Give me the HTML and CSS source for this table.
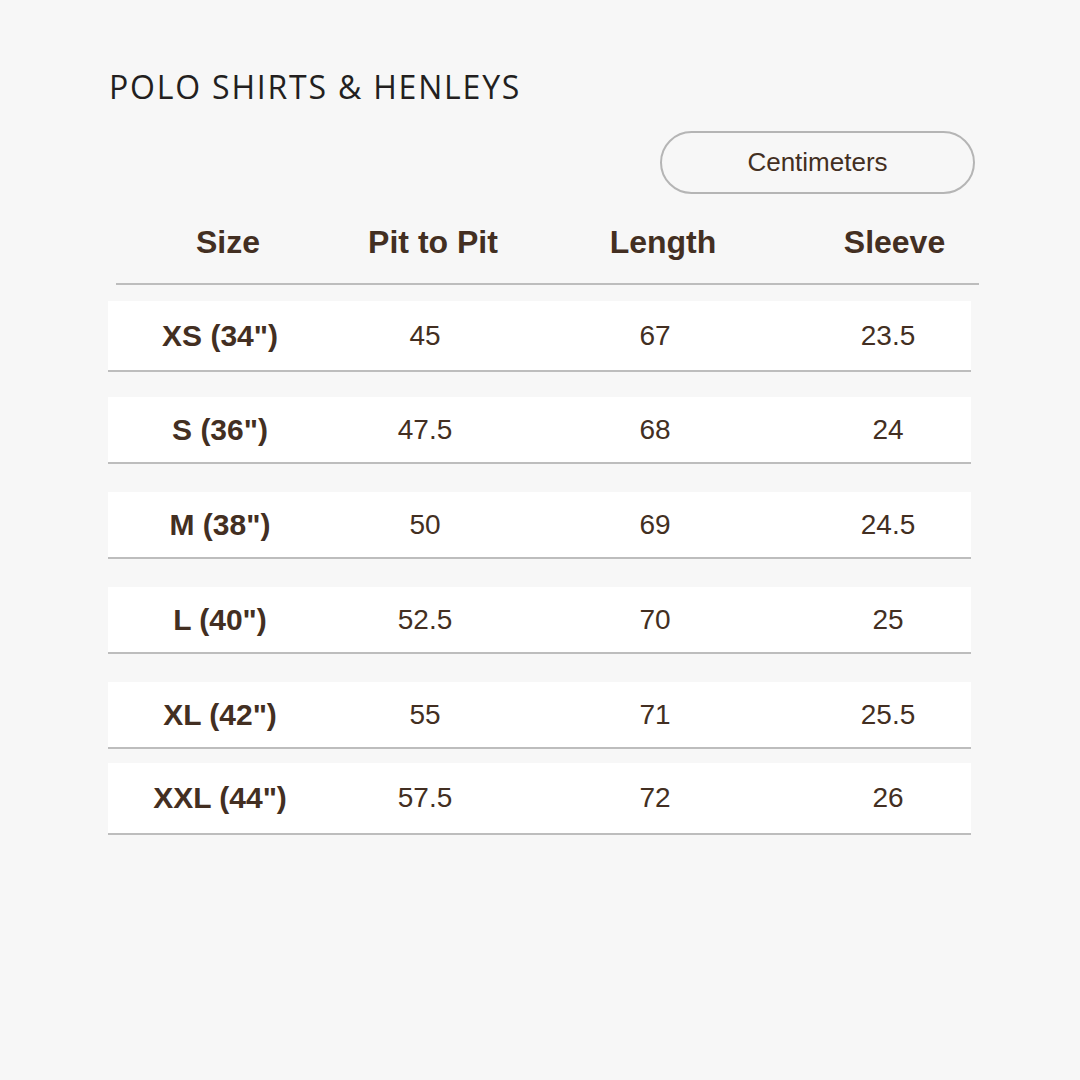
FILE: index.html
```html
<!DOCTYPE html>
<html lang="en">
<head>
<meta charset="utf-8">
<title>Polo Shirts &amp; Henleys — Size Chart</title>
<link rel="stylesheet" href="styles.css">
</head>
<body>
<main class="page">
  <h1 class="title">POLO SHIRTS &amp; HENLEYS</h1>
  <div class="unit-bar">
    <button class="unit-btn" type="button">Centimeters</button>
  </div>
  <div class="head-row">
    <div class="hcell">Size</div>
    <div class="hcell">Pit to Pit</div>
    <div class="hcell">Length</div>
    <div class="hcell c4">Sleeve</div>
  </div>
  <div class="rows">
    <div class="row r1">
      <div class="cell size">XS (34")</div>
      <div class="cell">45</div>
      <div class="cell">67</div>
      <div class="cell c4">23.5</div>
    </div>
    <div class="row r2">
      <div class="cell size">S (36")</div>
      <div class="cell">47.5</div>
      <div class="cell">68</div>
      <div class="cell c4">24</div>
    </div>
    <div class="row r3">
      <div class="cell size">M (38")</div>
      <div class="cell">50</div>
      <div class="cell">69</div>
      <div class="cell c4">24.5</div>
    </div>
    <div class="row r4">
      <div class="cell size">L (40")</div>
      <div class="cell">52.5</div>
      <div class="cell">70</div>
      <div class="cell c4">25</div>
    </div>
    <div class="row r5">
      <div class="cell size">XL (42")</div>
      <div class="cell">55</div>
      <div class="cell">71</div>
      <div class="cell c4">25.5</div>
    </div>
    <div class="row r6">
      <div class="cell size">XXL (44")</div>
      <div class="cell">57.5</div>
      <div class="cell">72</div>
      <div class="cell c4">26</div>
    </div>
  </div>
</main>
</body>
</html>
```
FILE: styles.css
```css
* { box-sizing: border-box; }
html, body {
  margin: 0;
  padding: 0;
  background: #f7f7f7;
}
body {
  width: 1080px;
  height: 1080px;
  font-family: "Liberation Sans", Arial, sans-serif;
  color: #432f22;
}
.page {
  padding: 67px 0 0 108px;
  width: 1080px;
}
.title {
  margin: 0 0 0 1px;
  font-family: "Open Sans", "Liberation Sans", sans-serif;
  font-weight: 400;
  font-size: 32px;
  line-height: 40px;
  color: #231f20;
  letter-spacing: 1.8px;
}
.unit-bar {
  display: flex;
  justify-content: flex-end;
  width: 867px;
  margin-top: 24px;
}
.unit-btn {
  width: 315px;
  height: 63px;
  border: 2px solid #b5b5b5;
  border-radius: 32px;
  background: transparent;
  font-family: "Liberation Sans", Arial, sans-serif;
  font-size: 26px;
  color: #432f22;
  padding: 0;
}
.head-row {
  display: grid;
  grid-template-columns: 224px 186px 274px 179px;
  width: 863px;
  margin-left: 8px;
  margin-top: 17px;
  height: 74px;
  border-bottom: 2px solid #bdbdbd;
  padding-top: 13px;
}
.hcell {
  text-align: center;
  font-weight: 700;
  font-size: 32px;
  line-height: 36px;
  color: #432f22;
}
.hcell.c4 { padding-left: 10px; }
.rows {
  display: flex;
  flex-direction: column;
  width: 863px;
  margin-top: 16px;
}
.row {
  display: grid;
  grid-template-columns: 224px 186px 274px 179px;
  align-items: center;
  background: #ffffff;
  border-bottom: 2px solid #bdbdbd;
}
.r1 { height: 71px; }
.r2 { height: 67px; margin-top: 25px; }
.r3 { height: 67px; margin-top: 28px; }
.r4 { height: 67px; margin-top: 28px; }
.r5 { height: 67px; margin-top: 28px; }
.r6 { height: 72px; margin-top: 14px; }
.cell {
  text-align: center;
  font-size: 28px;
  line-height: 32px;
  color: #432f22;
}
.cell.size {
  font-weight: 700;
  font-size: 30px;
}
.cell.c4 { padding-left: 13px; }
```
